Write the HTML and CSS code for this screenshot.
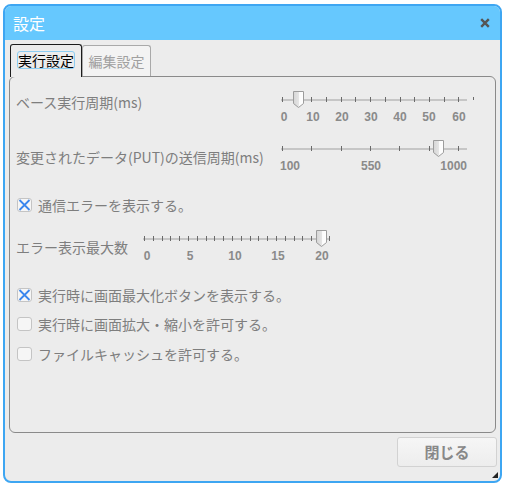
FILE: index.html
```html
<!DOCTYPE html>
<html lang="ja">
<head>
<meta charset="utf-8">
<title>設定</title>
<link rel="stylesheet" href="styles.css">
</head>
<body>
<svg class="defs" width="0" height="0" aria-hidden="true">
  <defs>
    <linearGradient id="tg" x1="0" x2="1" y1="0" y2="0">
      <stop offset="0" stop-color="#d6d6d6"/>
      <stop offset="0.5" stop-color="#e4e4e4"/>
      <stop offset="0.56" stop-color="#fbfbfb"/>
      <stop offset="1" stop-color="#ffffff"/>
    </linearGradient>
  </defs>
</svg>
<div class="dialog">
  <div class="titlebar">
    <span class="title">設定</span>
    <svg class="close" width="10" height="10" viewBox="0 0 10 10"><path d="M1.2 1.2L8.8 8.8M8.8 1.2L1.2 8.8" stroke="#555" stroke-width="2.4"/></svg>
  </div>
  <div class="body">
    <div class="tabs">
      <div class="tab active"><span class="focus">実行設定</span></div>
      <div class="tab">編集設定</div>
    </div>
    <div class="panel">
      <div class="srow r1">
        <div class="label wide">ベース実行周期(ms)</div>
        <div class="slider sa">
          <div class="rail">
            <div class="track"></div>
            <div class="ticks">
              <i class="tk"></i><i class="tk"></i><i class="tk"></i><i class="tk"></i><i class="tk"></i><i class="tk"></i><i class="tk"></i><i class="tk"></i><i class="tk"></i><i class="tk"></i><i class="tk"></i><i class="tk"></i><i class="tk"></i><i class="tk stub"></i>
            </div>
            <svg class="thumb" style="left:12px" width="11" height="17" viewBox="0 0 11 17"><path d="M0.5 0.5H10.5V12.5L5.5 16.5L0.5 12.5Z" fill="url(#tg)" stroke="#9c9c9c"/></svg>
          </div>
          <div class="labels">
            <span class="lab" style="left:3px">0</span>
            <span class="lab" style="left:32px">10</span>
            <span class="lab" style="left:61px">20</span>
            <span class="lab" style="left:90px">30</span>
            <span class="lab" style="left:119px">40</span>
            <span class="lab" style="left:148px">50</span>
            <span class="lab" style="left:178px">60</span>
          </div>
        </div>
      </div>

      <div class="srow r2">
        <div class="label wide">変更されたデータ(PUT)の送信周期(ms)</div>
        <div class="slider sb">
          <div class="rail">
            <div class="track"></div>
            <div class="ticks">
              <i class="tk"></i><i class="tk"></i><i class="tk"></i><i class="tk"></i><i class="tk"></i><i class="tk"></i><i class="tk"></i>
            </div>
            <svg class="thumb" style="left:152px" width="11" height="17" viewBox="0 0 11 17"><path d="M0.5 0.5H10.5V12.5L5.5 16.5L0.5 12.5Z" fill="url(#tg)" stroke="#9c9c9c"/></svg>
          </div>
          <div class="labels">
            <span class="lab start" style="left:-1px">100</span>
            <span class="lab" style="left:90px">550</span>
            <span class="lab end" style="left:186px">1000</span>
          </div>
        </div>
      </div>

      <div class="crow r3">
        <span class="cb"><svg width="13" height="12" viewBox="0 0 13 12"><path d="M1.5 1L11.5 11M11.5 1L1.5 11" stroke="#3a86ee" stroke-width="1.8"/></svg></span>
        <span class="ctext">通信エラーを表示する。</span>
      </div>

      <div class="srow r4">
        <div class="label narrow">エラー表示最大数</div>
        <div class="slider sc">
          <div class="rail">
            <div class="track"></div>
            <div class="ticks">
              <i class="tk"></i><i class="tk"></i><i class="tk"></i><i class="tk"></i><i class="tk"></i><i class="tk"></i><i class="tk"></i><i class="tk"></i><i class="tk"></i><i class="tk"></i><i class="tk"></i><i class="tk"></i><i class="tk"></i><i class="tk"></i><i class="tk"></i><i class="tk"></i><i class="tk"></i><i class="tk"></i><i class="tk"></i><i class="tk"></i><i class="tk"></i><i class="tk"></i>
            </div>
            <svg class="thumb" style="left:173px" width="11" height="17" viewBox="0 0 11 17"><path d="M0.5 0.5H10.5V12.5L5.5 16.5L0.5 12.5Z" fill="url(#tg)" stroke="#9c9c9c"/></svg>
          </div>
          <div class="labels">
            <span class="lab" style="left:4px">0</span>
            <span class="lab" style="left:47px">5</span>
            <span class="lab" style="left:92px">10</span>
            <span class="lab" style="left:135px">15</span>
            <span class="lab" style="left:179px">20</span>
          </div>
        </div>
      </div>

      <div class="crow r5">
        <span class="cb"><svg width="13" height="12" viewBox="0 0 13 12"><path d="M1.5 1L11.5 11M11.5 1L1.5 11" stroke="#3a86ee" stroke-width="1.8"/></svg></span>
        <span class="ctext">実行時に画面最大化ボタンを表示する。</span>
      </div>
      <div class="crow r6">
        <span class="cb"></span>
        <span class="ctext">実行時に画面拡大・縮小を許可する。</span>
      </div>
      <div class="crow r7">
        <span class="cb"></span>
        <span class="ctext">ファイルキャッシュを許可する。</span>
      </div>
    </div>
    <button class="btn" type="button">閉じる</button>
  </div>
  <span class="grip"></span>
</div>
</body>
</html>
```

FILE: styles.css
```css
* { box-sizing: border-box; }
html, body { margin: 0; padding: 0; background: #ffffff; }
body { font-family: "Noto Sans CJK JP", "Noto Sans", sans-serif; }

.defs { display: block; width: 0; height: 0; overflow: hidden; }

.dialog {
  position: relative;
  margin: 4px 0 0 3px;
  width: 499px;
  height: 479px;
  border: 2px solid #3ea6f2;
  border-radius: 8px;
  background: #ececec;
  overflow: hidden;
  display: flex;
  flex-direction: column;
}

.titlebar {
  height: 34px;
  flex: 0 0 34px;
  background: #66c8fe;
  display: flex;
  align-items: center;
  justify-content: space-between;
  padding: 0 10px 0 8px;
}
.title { color: #ffffff; font-size: 16px; line-height: 20px; }
.close { display: block; }

.body {
  flex: 1;
  display: flex;
  flex-direction: column;
  padding: 4px 4px 0 4px;
}

.tabs {
  display: flex;
  align-items: flex-end;
  height: 32px;
  padding-left: 1px;
}
.tab {
  width: 69px;
  height: 31px;
  border: 1px solid #a9a9a9;
  border-bottom: none;
  border-radius: 3px 3px 0 0;
  background: #f3f3f3;
  color: #a0a0a0;
  font-size: 14px;
  line-height: 16px;
  display: flex;
  justify-content: center;
  align-items: flex-start;
  padding-top: 7px;
}
.tab.active {
  width: 72px;
  height: 33px;
  margin-bottom: -1px;
  border-color: #1c1c1c;
  background: #ececec;
  color: #000000;
  position: relative;
  z-index: 1;
  padding-top: 6px;
}
.focus {
  display: block;
  border: 1px solid #8ccdf2;
  border-radius: 3px;
  line-height: 16px;
  padding: 0;
}

.panel {
  height: 357px;
  flex: 0 0 357px;
  border: 1px solid #8a8a8a;
  border-radius: 6px;
  background: #ececec;
  padding: 15px 0 0 6px;
}

.label {
  font-size: 14px;
  line-height: 20px;
  color: #7e7e7e;
  white-space: nowrap;
}
.label.wide { width: 265px; flex: 0 0 265px; }
.label.narrow { width: 127px; flex: 0 0 127px; margin-top: 6px; }

.srow { display: flex; align-items: flex-start; }
.r2 { margin-top: 17px; }
.r2 .label { margin-top: 6px; }
.r4 { margin-top: 16px; }

.slider { display: flex; flex-direction: column; }
.sa { width: 194px; }
.sb { width: 186px; }
.sc { width: 187px; }

.rail { position: relative; height: 16px; }
.track { height: 2px; margin-top: 7px; background: #c6c6c6; }
.sa .track { width: 186px; }
.ticks {
  position: absolute;
  top: 5px;
  left: 1px;
  height: 5px;
  display: flex;
  justify-content: space-between;
  align-items: flex-start;
}
.sa .ticks { width: 192px; }
.sb .ticks { width: 177px; }
.sc .ticks { width: 186px; }
.tk { display: block; width: 1px; height: 5px; background: #6a6a6a; }
.tk.stub { height: 3px; }
.thumb { position: absolute; top: -1px; display: block; }

.labels { position: relative; height: 14px; margin-top: 2px; }
.lab {
  position: absolute;
  top: 0;
  transform: translateX(-50%);
  font-family: "Liberation Sans", Arial, sans-serif;
  font-weight: bold;
  font-size: 12px;
  line-height: 14px;
  color: #8a8a8a;
  white-space: nowrap;
}
.lab.start { transform: none; }
.lab.end { transform: translateX(-100%); }

.crow { display: flex; align-items: center; height: 20px; }
.r3 { margin-top: 22px; }
.r5 { margin-top: 22px; }
.r6 { margin-top: 9px; }
.r7 { margin-top: 10px; }
.cb {
  width: 15px;
  height: 14px;
  flex: 0 0 15px;
  margin-left: 1px;
  border: 1px solid #c4c4c4;
  border-radius: 3px;
  background: #f6f6f6;
  display: flex;
  align-items: center;
  justify-content: center;
}
.cb svg { display: block; flex: 0 0 auto; }
.ctext {
  margin-left: 6px;
  font-size: 14px;
  line-height: 20px;
  color: #7e7e7e;
  white-space: nowrap;
}

.btn {
  align-self: flex-end;
  margin: 4px -1px 0 0;
  width: 100px;
  height: 30px;
  border: 1px solid #d2d2d2;
  border-radius: 3px;
  background: linear-gradient(#f6f6f6, #ededed);
  color: #888888;
  font-family: "Noto Sans CJK JP", "Noto Sans", sans-serif;
  font-weight: bold;
  font-size: 15px;
  line-height: 20px;
  padding: 0;
}

.grip {
  position: absolute;
  right: 2px;
  bottom: 3px;
  width: 0;
  height: 0;
  border-left: 6px solid transparent;
  border-bottom: 6px solid #222222;
}
```
